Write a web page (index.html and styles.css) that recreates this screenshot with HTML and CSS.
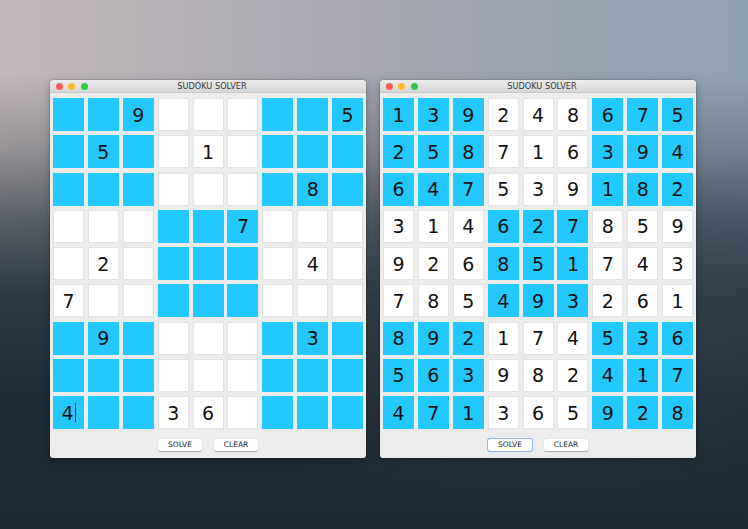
FILE: index.html
```html
<!DOCTYPE html>
<html>
<head>
<meta charset="utf-8">
<link rel="stylesheet" href="styles.css">
</head>
<body>
<div class="desk">
  <div class="win">
    <div class="titlebar">
      <div class="lights"><span class="dot red"></span><span class="dot yellow"></span><span class="dot green"></span></div>
      <div class="title">SUDOKU SOLVER</div>
    </div>
    <div class="grid">
      <div class="c on"></div><div class="c on"></div><div class="c on">9</div><div class="c"></div><div class="c"></div><div class="c"></div><div class="c on"></div><div class="c on"></div><div class="c on">5</div>
      <div class="c on"></div><div class="c on">5</div><div class="c on"></div><div class="c"></div><div class="c">1</div><div class="c"></div><div class="c on"></div><div class="c on"></div><div class="c on"></div>
      <div class="c on"></div><div class="c on"></div><div class="c on"></div><div class="c"></div><div class="c"></div><div class="c"></div><div class="c on"></div><div class="c on">8</div><div class="c on"></div>
      <div class="c"></div><div class="c"></div><div class="c"></div><div class="c on"></div><div class="c on"></div><div class="c on">7</div><div class="c"></div><div class="c"></div><div class="c"></div>
      <div class="c"></div><div class="c">2</div><div class="c"></div><div class="c on"></div><div class="c on"></div><div class="c on"></div><div class="c"></div><div class="c">4</div><div class="c"></div>
      <div class="c">7</div><div class="c"></div><div class="c"></div><div class="c on"></div><div class="c on"></div><div class="c on"></div><div class="c"></div><div class="c"></div><div class="c"></div>
      <div class="c on"></div><div class="c on">9</div><div class="c on"></div><div class="c"></div><div class="c"></div><div class="c"></div><div class="c on"></div><div class="c on">3</div><div class="c on"></div>
      <div class="c on"></div><div class="c on"></div><div class="c on"></div><div class="c"></div><div class="c"></div><div class="c"></div><div class="c on"></div><div class="c on"></div><div class="c on"></div>
      <div class="c on">4<span class="caret"></span></div><div class="c on"></div><div class="c on"></div><div class="c">3</div><div class="c">6</div><div class="c"></div><div class="c on"></div><div class="c on"></div><div class="c on"></div>
    </div>
    <div class="actions">
      <button class="btn">SOLVE</button>
      <button class="btn">CLEAR</button>
    </div>
  </div>

  <div class="win">
    <div class="titlebar">
      <div class="lights"><span class="dot red"></span><span class="dot yellow"></span><span class="dot green"></span></div>
      <div class="title">SUDOKU SOLVER</div>
    </div>
    <div class="grid">
      <div class="c on">1</div><div class="c on">3</div><div class="c on">9</div><div class="c">2</div><div class="c">4</div><div class="c">8</div><div class="c on">6</div><div class="c on">7</div><div class="c on">5</div>
      <div class="c on">2</div><div class="c on">5</div><div class="c on">8</div><div class="c">7</div><div class="c">1</div><div class="c">6</div><div class="c on">3</div><div class="c on">9</div><div class="c on">4</div>
      <div class="c on">6</div><div class="c on">4</div><div class="c on">7</div><div class="c">5</div><div class="c">3</div><div class="c">9</div><div class="c on">1</div><div class="c on">8</div><div class="c on">2</div>
      <div class="c">3</div><div class="c">1</div><div class="c">4</div><div class="c on">6</div><div class="c on">2</div><div class="c on">7</div><div class="c">8</div><div class="c">5</div><div class="c">9</div>
      <div class="c">9</div><div class="c">2</div><div class="c">6</div><div class="c on">8</div><div class="c on">5</div><div class="c on">1</div><div class="c">7</div><div class="c">4</div><div class="c">3</div>
      <div class="c">7</div><div class="c">8</div><div class="c">5</div><div class="c on">4</div><div class="c on">9</div><div class="c on">3</div><div class="c">2</div><div class="c">6</div><div class="c">1</div>
      <div class="c on">8</div><div class="c on">9</div><div class="c on">2</div><div class="c">1</div><div class="c">7</div><div class="c">4</div><div class="c on">5</div><div class="c on">3</div><div class="c on">6</div>
      <div class="c on">5</div><div class="c on">6</div><div class="c on">3</div><div class="c">9</div><div class="c">8</div><div class="c">2</div><div class="c on">4</div><div class="c on">1</div><div class="c on">7</div>
      <div class="c on">4</div><div class="c on">7</div><div class="c on">1</div><div class="c">3</div><div class="c">6</div><div class="c">5</div><div class="c on">9</div><div class="c on">2</div><div class="c on">8</div>
    </div>
    <div class="actions">
      <button class="btn focus">SOLVE</button>
      <button class="btn">CLEAR</button>
    </div>
  </div>
</div>
</body>
</html>
```
FILE: styles.css
```css
html, body {
  margin: 0;
  padding: 0;
  width: 748px;
  height: 529px;
  overflow: hidden;
}
body {
  background:
    radial-gradient(ellipse 380px 180px at 540px 330px, rgba(60, 78, 90, 0.5), rgba(60, 78, 90, 0) 100%),
    linear-gradient(to bottom, rgba(30, 43, 52, 0) 14%, rgba(45, 58, 68, 0.3) 28%, rgba(40, 54, 64, 0.7) 42%, rgba(37, 51, 61, 0.95) 56%, #1f2c35 75%, #1d2a33 100%),
    linear-gradient(to right, #c3b8b9 0%, #b2afb6 30%, #a4a6b0 55%, #98a3b0 80%, #8fa2b2 100%);
  font-family: "DejaVu Sans", "Liberation Sans", sans-serif;
}
.desk {
  display: flex;
  gap: 14px;
  padding: 80px 0 0 50px;
}
.win {
  width: 316px;
  height: 378px;
  background: #ececec;
  border-radius: 4px 4px 3px 3px;
  box-shadow: 0 2px 10px rgba(0, 0, 0, 0.25), 0 0 0 0.5px rgba(0, 0, 0, 0.2);
  display: flex;
  flex-direction: column;
  overflow: hidden;
}
.titlebar {
  height: 12px;
  background: linear-gradient(to bottom, #ebebeb, #d7d7d7);
  border-bottom: 1px solid #c8c8c8;
  display: flex;
  align-items: center;
  position: relative;
}
.lights {
  display: flex;
  gap: 5.5px;
  padding-left: 5.5px;
}
.dot {
  width: 7px;
  height: 7px;
  border-radius: 50%;
  display: block;
}
.red { background: #fc5d56; }
.yellow { background: #fdbc2f; }
.green { background: #33c748; }
.title {
  position: absolute;
  left: 0;
  right: 0;
  top: 0;
  text-align: center;
  font-size: 8.2px;
  line-height: 12px;
  color: #3a3a3a;
  padding-left: 8px;
}
.grid {
  display: grid;
  grid-template-columns: repeat(9, 31px);
  grid-template-rows: repeat(9, 33px);
  column-gap: 3.9px;
  row-gap: 4.25px;
  padding: 5px 0 0 3px;
}
.c {
  background: #ffffff;
  box-shadow: inset 0 0 0 1px #e3e3e3;
  display: flex;
  align-items: center;
  justify-content: center;
  font-size: 19px;
  color: #111;
  position: relative;
}
.c.on {
  background: #23c8fe;
  box-shadow: none;
}
.caret {
  display: inline-block;
  width: 1px;
  height: 19px;
  background: #222;
  margin-left: 1px;
}
.actions {
  display: flex;
  justify-content: center;
  gap: 12px;
  padding-top: 10px;
}
.btn {
  width: 44px;
  height: 12px;
  padding: 0;
  margin: 0;
  border: none;
  border-radius: 2px;
  background: #ffffff;
  box-shadow: 0 0.5px 1px rgba(0, 0, 0, 0.3);
  font-family: "DejaVu Sans", sans-serif;
  font-size: 7.5px;
  line-height: 12px;
  color: #222;
}
.btn.focus {
  box-shadow: 0 0 0 1px #8fb5ea, 0 0.5px 1px rgba(0, 0, 0, 0.2);
}
```
